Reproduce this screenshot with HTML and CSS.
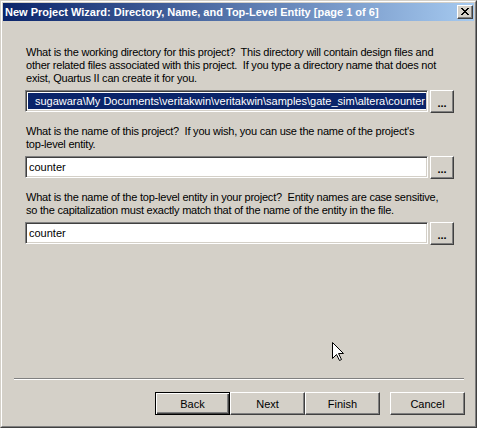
FILE: index.html
```html
<!DOCTYPE html>
<html lang="en">
<head>
  <meta charset="UTF-8">
  <title>New Project Wizard</title>
  <link rel="stylesheet" href="styles.css">
</head>
<body>

  <div class="window">
    <div class="frame">
      <div class="titlebar">
        <span class="title">New Project Wizard: Directory, Name, and Top-Level Entity [page 1 of 6]</span>
        <button class="close-btn">
          <svg width="8" height="7" viewBox="0 0 8 7">
            <path d="M0 0h2v1h-2z M6 0h2v1h-2z M1 1h2v1h-2z M5 1h2v1h-2z M2 2h4v1h-4z M3 3h2v1h-2z M2 4h4v1h-4z M1 5h2v1h-2z M5 5h2v1h-2z M0 6h2v1h-2z M6 6h2v1h-2z" fill="#000"/>
          </svg>
        </button>
      </div>

      <div class="content">
        <div class="section">
          <p>What is the working directory for this project?&nbsp; This directory will contain design files and<br>
          other related files associated with this project.&nbsp; If you type a directory name that does not<br>
          exist, Quartus II can create it for you.</p>
          <div class="field-row">
            <div class="field"><span class="selected">sugawara\My Documents\veritakwin\veritakwin\samples\gate_sim\altera\counter</span></div>
            <button class="browse-btn">...</button>
          </div>
        </div>

        <div class="section">
          <p>What is the name of this project?&nbsp; If you wish, you can use the name of the project's<br>
          top-level entity.</p>
          <div class="field-row">
            <div class="field">counter</div>
            <button class="browse-btn">...</button>
          </div>
        </div>

        <div class="section">
          <p>What is the name of the top-level entity in your project?&nbsp; Entity names are case sensitive,<br>
          so the capitalization must exactly match that of the name of the entity in the file.</p>
          <div class="field-row">
            <div class="field">counter</div>
            <button class="browse-btn">...</button>
          </div>
        </div>
      </div>

      <div class="footer">
        <div class="separator"></div>
        <div class="buttons">
          <button class="btn default">Back</button>
          <button class="btn">Next</button>
          <button class="btn">Finish</button>
          <button class="btn cancel">Cancel</button>
        </div>
      </div>
    </div>

    <svg class="cursor" width="12" height="20" viewBox="0 0 12 20">
      <path d="M0.5 0.5 L0.5 16.5 L4.5 12.5 L7.5 18.5 L9.5 17.5 L6.5 11.5 L11.5 11.5 Z" fill="#fff" stroke="#000" stroke-width="1"/>
    </svg>
  </div>

</body>
</html>
```

FILE: styles.css
```css
body {
  margin: 0;
  background: #d4d0c8;
  font-family: 'Liberation Sans', Arial, sans-serif;
  font-size: 11px;
  color: #000;
}

.window {
  position: relative;
  width: 477px;
  height: 428px;
  box-sizing: border-box;
  border: 1px solid;
  border-color: #d4d0c8 #404040 #404040 #d4d0c8;
  background: #d4d0c8;
}

.frame {
  height: 100%;
  box-sizing: border-box;
  border: 1px solid;
  border-color: #fff #808080 #808080 #fff;
  padding: 1px;
  display: flex;
  flex-direction: column;
}

.titlebar {
  height: 18px;
  display: flex;
  align-items: flex-start;
  justify-content: space-between;
  background: linear-gradient(to right, #0a246a, #a6caf0);
}

.title {
  padding-left: 2px;
  line-height: 18px;
  font-weight: bold;
  color: #fff;
  white-space: nowrap;
}

.close-btn {
  width: 16px;
  height: 14px;
  margin: 2px 1px 0 0;
  padding: 0;
  display: flex;
  align-items: center;
  justify-content: center;
  background: #d4d0c8;
  border: 1px solid;
  border-color: #fff #404040 #404040 #fff;
  box-shadow: inset -1px -1px #808080;
}

.close-btn svg {
  display: block;
  margin: 0 1px 1px 0;
}

.content {
  flex: 1;
  padding: 13px 20px 0 22px;
}

.section {
  margin-top: 12px;
}

.section p {
  margin: 0;
  padding-left: 1px;
  line-height: 13px;
  letter-spacing: -0.22px;
  white-space: nowrap;
}

.field-row {
  display: flex;
  gap: 2px;
  margin-top: 5px;
}

.field {
  flex: 1;
  height: 22px;
  box-sizing: border-box;
  border: 1px solid;
  border-color: #808080 #fff #fff #808080;
  box-shadow: inset 1px 1px #404040, inset -1px -1px #d4d0c8;
  background: #fff;
  padding: 3px 3px 0 3px;
  line-height: 14px;
  white-space: nowrap;
  overflow: hidden;
}

.field .selected {
  display: block;
  margin: -1px -2px 0 -1px;
  padding: 1px 1px 1px 1px;
  background: #0a246a;
  color: #fff;
  text-align: right;
  overflow: hidden;
}

.browse-btn,
.btn {
  box-sizing: border-box;
  padding: 0;
  background: #d4d0c8;
  font-family: inherit;
  font-size: 11px;
  color: #000;
  border: 1px solid;
  border-color: #fff #404040 #404040 #fff;
  box-shadow: inset -1px -1px #808080;
}

.browse-btn {
  width: 24px;
  height: 23px;
  font-weight: bold;
  padding-top: 2px;
}

.footer {
  padding: 0 9px 10px 11px;
}

.separator {
  height: 0;
  margin-right: 1px;
  border-top: 1px solid #808080;
  border-bottom: 1px solid #fff;
}

.buttons {
  display: flex;
  justify-content: flex-end;
  margin-top: 12px;
}

.btn {
  width: 75px;
  height: 23px;
}

.btn.default {
  border-color: #000;
  box-shadow: inset 1px 1px #fff, inset -1px -1px #404040, inset -2px -2px #808080;
}

.btn.cancel {
  margin-left: 10px;
}

.cursor {
  position: absolute;
  left: 331px;
  top: 341px;
}
```
